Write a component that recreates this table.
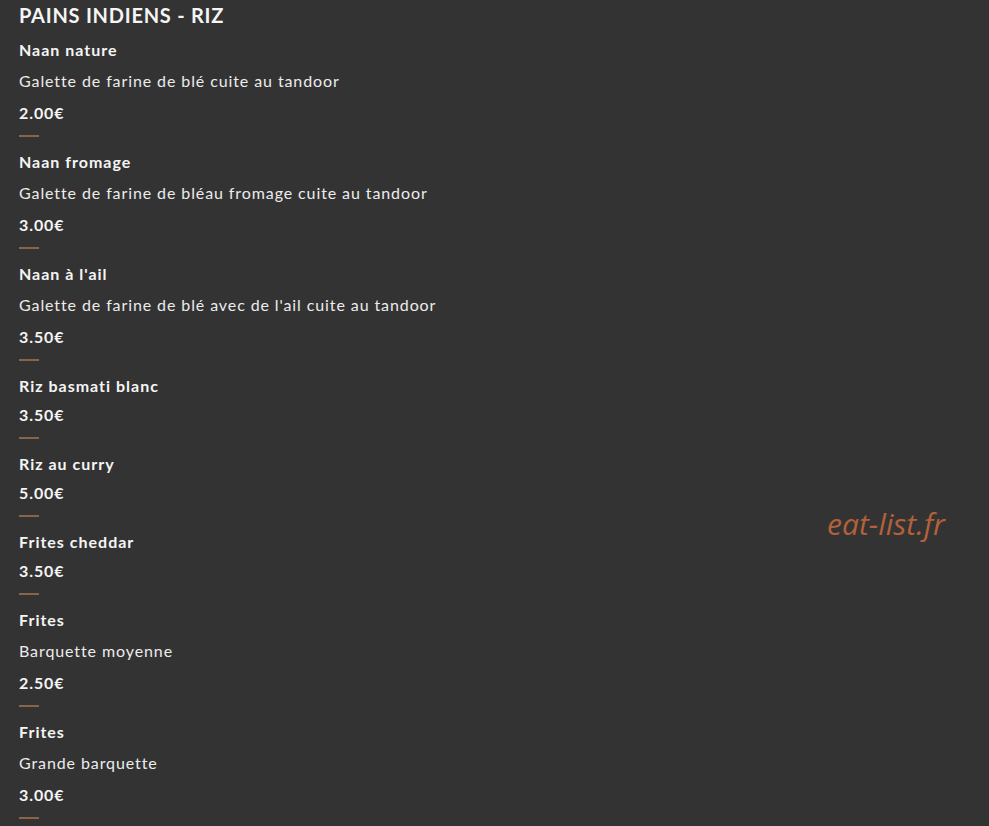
import React from 'react';

type Item = { name: string; desc?: string; price: string };

const items: Item[] = [
  { name: 'Naan nature', desc: 'Galette de farine de blé cuite au tandoor', price: '2.00€' },
  { name: 'Naan fromage', desc: 'Galette de farine de bléau fromage cuite au tandoor', price: '3.00€' },
  { name: "Naan à l'ail", desc: "Galette de farine de blé avec de l'ail cuite au tandoor", price: '3.50€' },
  { name: 'Riz basmati blanc', price: '3.50€' },
  { name: 'Riz au curry', price: '5.00€' },
  { name: 'Frites cheddar', price: '3.50€' },
  { name: 'Frites', desc: 'Barquette moyenne', price: '2.50€' },
  { name: 'Frites', desc: 'Grande barquette', price: '3.00€' },
];

const App: React.FC = () => {
  return (
    <div className="relative min-h-[826px] bg-[#333333] px-[19px] text-[#f5f5f5] font-['Lato','Liberation_Sans',sans-serif] overflow-hidden">
      <h1 className="h-[30px] leading-[30px] text-[20px] font-bold uppercase tracking-[0.75px]">
        Pains indiens - Riz
      </h1>

      <div className="pt-[5px]">
        {items.map((item, i) => (
          <div key={i}>
            <p className="h-[29px] leading-[29px] text-[16px] font-bold tracking-[1px]">{item.name}</p>
            {item.desc && (
              <p className="mt-[2px] mb-[3px] h-[29px] leading-[29px] text-[16px] tracking-[0.9px] text-[#ececec]">
                {item.desc}
              </p>
            )}
            <p className="h-[29px] leading-[29px] text-[16px] font-bold tracking-[0.9px]">{item.price}</p>
            <div className="mt-[8px] mb-[10px] h-[2px] w-[20px] bg-[#8a6448]" />
          </div>
        ))}
      </div>

      {/* watermark */}
      <span className="absolute left-[827px] top-[501px] text-[30px] italic text-[#b4603b] font-['Open_Sans',sans-serif]">
        eat-list.fr
      </span>
    </div>
  );
};

export default App;
